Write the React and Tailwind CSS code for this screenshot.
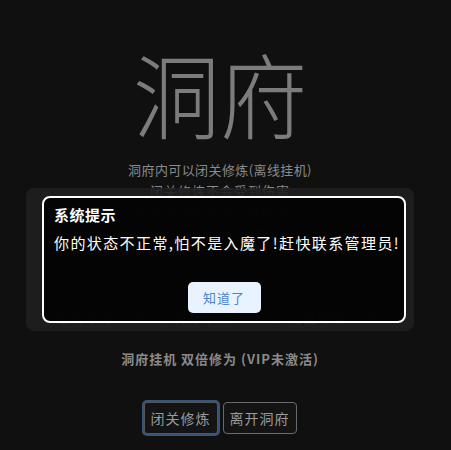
import React from "react";

const cjk = { fontFamily: '"Noto Sans CJK SC", "Noto Sans", sans-serif' };

export default function App() {
  return (
    <div className="relative w-[451px] h-[450px] bg-[#101010] overflow-hidden" style={cjk}>
      <div className="w-[440px] flex flex-col items-center pt-[41px]">
        <h1 className="text-[87px] leading-[96px] font-light text-[#7c7c7c] scale-y-[1.06] origin-top">洞府</h1>
        <div className="mt-[22px] flex flex-col items-center text-[13px] leading-[21px] tracking-[1px] text-[#8a8a8a]">
          <p className="tracking-[0.4px]">洞府内可以闭关修炼(离线挂机)</p>
          <p>闭关修炼不会受到伤害</p>
          <p>即使离线也可持续获得修为</p>
          <p>当前洞府灵气充足，修炼速度提升</p>
          <p className="text-[#7a1010]">灵气浓度越高修炼越快，请勿随意离开洞府</p>
          <p className="text-[#7a1010]">关卫战斗时洞府上限已满请注意修炼时间</p>
          <p className="mt-[21px]">还剩等待：100 ｜ 洞府等级：110 ｜ 元宝等级：106</p>
        </div>
        <p className="mt-[21px] text-[13px] leading-[21px] tracking-[1px] font-bold text-[#8a8a8a]">洞府挂机 双倍修为 (VIP未激活)</p>
        <div className="mt-[33px] flex items-center gap-[5px]">
          <button className="h-[32px] px-[6px] rounded-[3px] border border-[#555] text-[14px] tracking-[1px] text-[#9a9a9a] bg-[#141414] ring-2 ring-[#35557a]">
            闭关修炼
          </button>
          <button className="h-[32px] px-[6px] rounded-[4px] border border-[#6a6a6a] text-[14px] tracking-[1px] text-[#9a9a9a] bg-[#141414]">
            离开洞府
          </button>
        </div>
      </div>

      {/* system notice dialog */}
      <div className="absolute left-[26px] top-[188px] w-[388px] h-[143px] rounded-[8px] bg-[#1f1f1f]/90 py-[8px] pl-[16px] pr-[8px]">
        <div className="h-[127px] rounded-[8px] border-2 border-white bg-black/85 px-[10px] pt-[6px] flex flex-col">
          <p className="text-[15px] font-bold text-white leading-[22px] tracking-[0.5px]">系统提示</p>
          <p className="mt-[6px] text-[15px] text-white leading-[22px] tracking-[1.4px] whitespace-nowrap">你的状态不正常,怕不是入魔了!赶快联系管理员!</p>
          <div className="mt-[28px] flex justify-center">
            <button className="w-[73px] h-[31px] rounded-[5px] bg-[#e8f3ff] text-[13px] tracking-[1px] text-[#4a86c8]">知道了</button>
          </div>
        </div>
      </div>
    </div>
  );
}
